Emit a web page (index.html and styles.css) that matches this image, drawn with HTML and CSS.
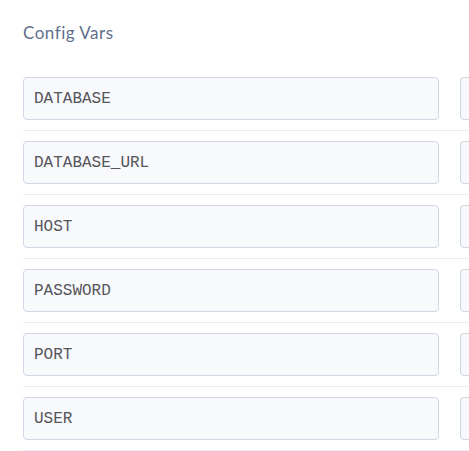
FILE: index.html
```html
<!DOCTYPE html>
<html>
<head>
<meta charset="utf-8">
<link rel="stylesheet" href="styles.css">
</head>
<body>
<div class="page">
  <h2 class="title">Config Vars</h2>
  <div class="list">
    <div class="row"><div class="field key">DATABASE</div><div class="field val"></div></div>
    <div class="row"><div class="field key">DATABASE_URL</div><div class="field val"></div></div>
    <div class="row"><div class="field key">HOST</div><div class="field val"></div></div>
    <div class="row"><div class="field key">PASSWORD</div><div class="field val"></div></div>
    <div class="row"><div class="field key">PORT</div><div class="field val"></div></div>
    <div class="row"><div class="field key">USER</div><div class="field val"></div></div>
  </div>
</div>
</body>
</html>
```
FILE: styles.css
```css
html, body {
  margin: 0;
  padding: 0;
  background: #ffffff;
  overflow: hidden;
}
.page {
  padding: 0 0 0 23px;
  width: 446px;
  overflow: hidden;
}
.title {
  margin: 0;
  padding-top: 23px;
  height: 67px;
  box-sizing: border-box;
  font-family: Lato, "Open Sans", sans-serif;
  font-weight: 400;
  font-size: 17px;
  letter-spacing: 0.5px;
  line-height: 20px;
  color: #5f6f8d;
}
.row {
  display: flex;
  gap: 21px;
  padding: 10px 0;
  border-bottom: 1px solid #e7ebf2;
}
.field {
  box-sizing: border-box;
  height: 43px;
  width: 416px;
  flex: none;
  border: 1px solid #cfd6e4;
  border-radius: 4px;
  background: #f8f9fc;
  padding: 1px 10px 0 10px;
  display: flex;
  align-items: center;
  font-family: "Liberation Mono", monospace;
  font-size: 16px;
  color: #55555a;
}
```
